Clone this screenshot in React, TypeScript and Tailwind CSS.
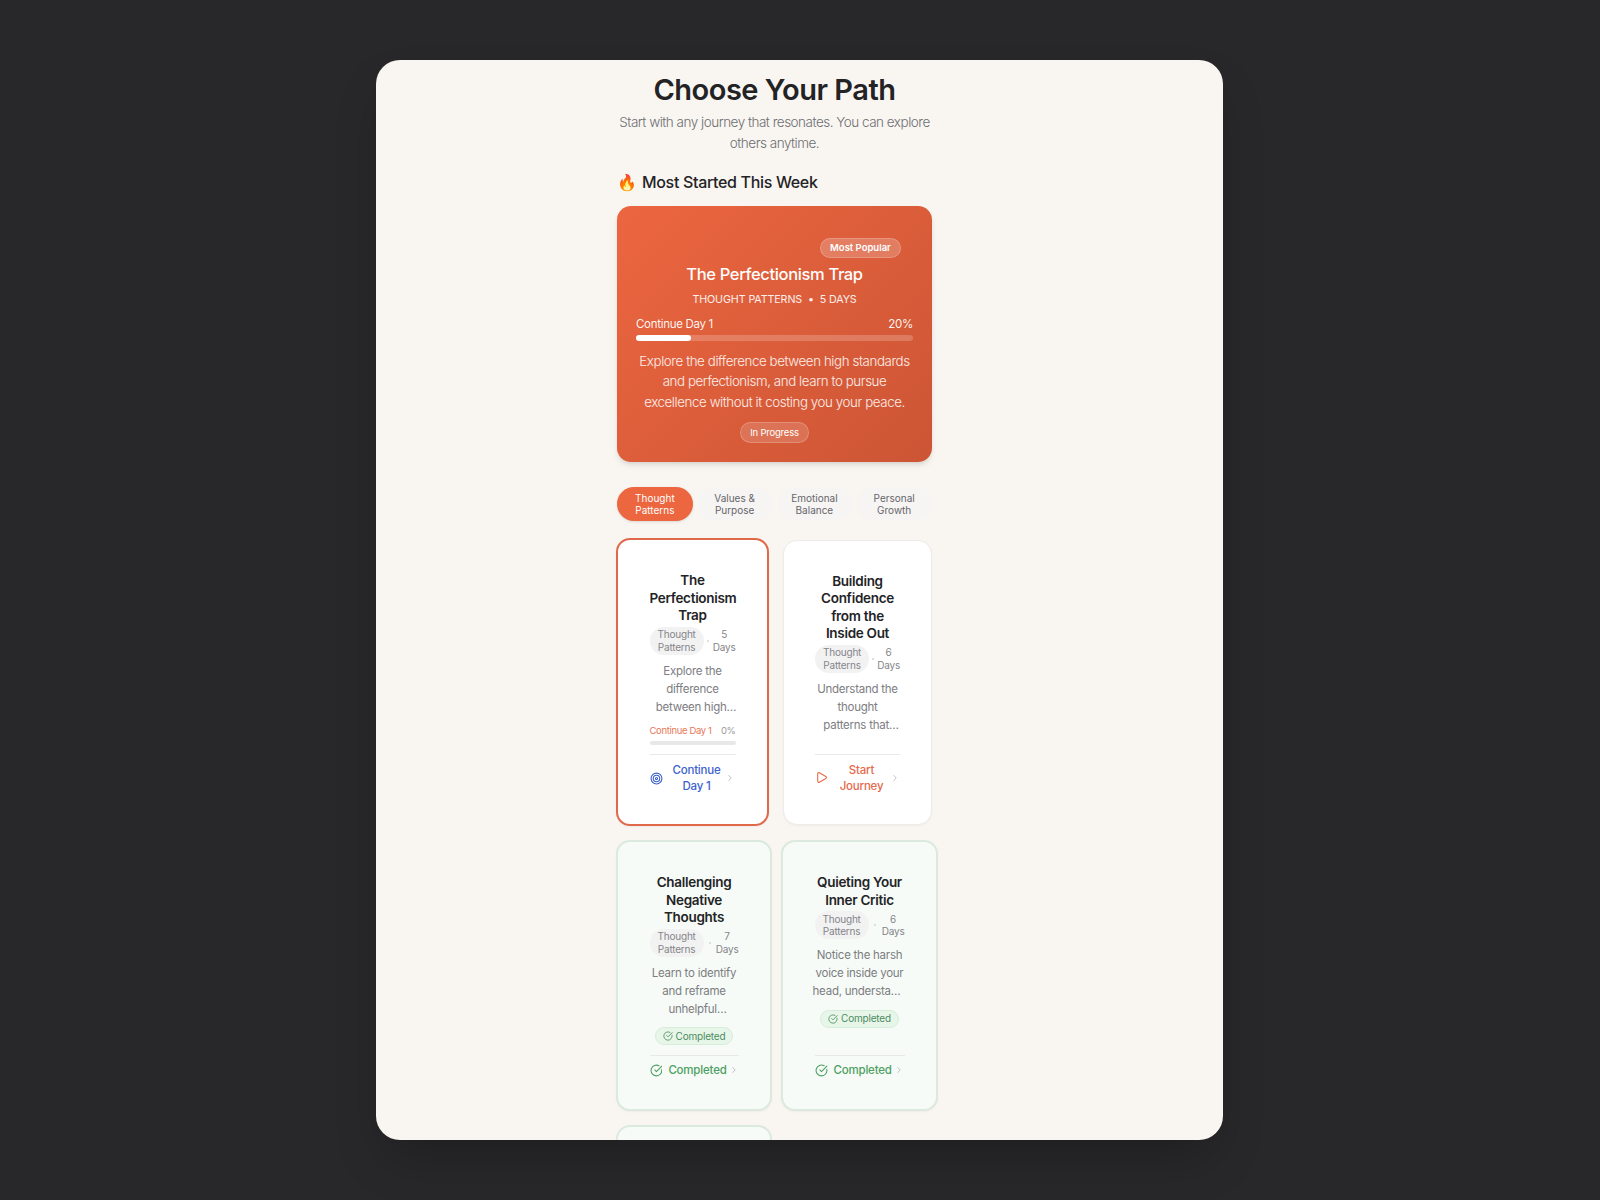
import React from 'react';
import { ChevronRight, CircleCheckBig, Play, Target } from 'lucide-react';

const font = { fontFamily: 'Inter, "Noto Sans", sans-serif' };

const tabs = [
  ['Thought', 'Patterns'],
  ['Values &', 'Purpose'],
  ['Emotional', 'Balance'],
  ['Personal', 'Growth'],
];

interface CardProps {
  title: string[];
  days: string;
  desc: string[];
  tone: 'active' | 'plain' | 'done';
  size: string;
  inner: string;
  lastLine?: string;
  children?: React.ReactNode;
  footer: React.ReactNode;
}

const toneClass = {
  active: 'bg-white border-2 border-[#e0694a] pt-[32px]',
  plain: 'bg-white border border-[#eeece8] pt-[32px]',
  done: 'bg-[#f6fbf7] border-2 border-[#dce9de] pt-[32px]',
};

const Card: React.FC<CardProps> = ({ title, days, desc, tone, size, inner, lastLine, children, footer }) => (
  <div className={`${size} ${toneClass[tone]} shrink-0 rounded-[14px] shadow-[0_1px_2px_rgba(0,0,0,0.04)] flex flex-col items-center`}>
    <div className={`${inner} flex flex-col flex-1 pb-[31px]`}>
      <h3 className="text-[13.5px] leading-[17.5px] font-semibold text-[#232326] text-center tracking-[-0.3px]">
        {title.map((t) => (
          <div key={t}>{t}</div>
        ))}
      </h3>
      <div className="flex items-center justify-between mt-[2px] text-[10px] leading-[12.5px] text-[#85858a] text-center tracking-[-0.2px]">
        <span className="rounded-full bg-[#f2f2f2] px-2 py-[1.5px]">
          Thought
          <br />
          Patterns
        </span>
        <span className="w-[2px] h-[2px] rounded-full bg-[#d5d5d5]" />
        <span>
          {days.split(' ')[0]}
          <br />
          Days
        </span>
      </div>
      <div className="mt-[7px] text-[11.5px] leading-[18px] text-[#7d7d82] text-center tracking-[-0.25px] whitespace-nowrap">
        {desc.map((line, i) => (
          <div key={line} className={i === desc.length - 1 ? lastLine ?? 'ml-[3.5px] -mr-[3.5px]' : ''}>
            {line}
          </div>
        ))}
      </div>
      {children}
      <div className="mt-auto border-t border-[#e9e9e7]">{footer}</div>
    </div>
  </div>
);

const DoneBadge = () => (
  <div className="self-center mt-[9.5px] flex items-center gap-[3px] h-[18px] px-[7px] rounded-full bg-[#e8f6ea] border border-[#d5edd9] text-[10px] text-[#4b8c5e] tracking-[-0.2px]">
    <CircleCheckBig size={10} />
    Completed
  </div>
);

const DoneFooter = () => (
  <div className="flex items-center pt-[6px] text-[11.5px] leading-4 font-medium text-[#4da062] tracking-[-0.2px]">
    <CircleCheckBig size={13} />
    <span className="ml-[6px]">Completed</span>
    <ChevronRight size={10} className="ml-[2px] text-[#b5b5b5]" />
  </div>
);

export default function App() {
  return (
    <div className="min-h-screen bg-[#28272a] flex items-center justify-center pr-[2px]" style={font}>
      <div className="w-[847px] h-[1080px] bg-[#f9f6f1] rounded-[24px] overflow-hidden shadow-2xl pl-[241.5px] pt-[12px]">
        <div className="w-[315px]">
          <h1 className="text-[29px] leading-9 font-semibold text-[#232326] text-center tracking-[-0.5px]">Choose Your Path</h1>
          <p className="mt-[4px] text-[13.5px] leading-[20.5px] font-light text-[#6e6e72] text-center tracking-[-0.5px] whitespace-nowrap">
            Start with any journey that resonates. You can explore
            <br />
            others anytime.
          </p>
          <div className="mt-[17px] flex items-center gap-[5px] h-6">
            <span className="text-[16px] leading-6">🔥</span>
            <h2 className="text-[16px] font-medium text-[#232326] tracking-[-0.33px]">Most Started This Week</h2>
          </div>

          <div className="mt-[12px] h-[256px] w-[315px] rounded-[14px] bg-[linear-gradient(135deg,#ec6640,#cc5535)] shadow-md px-[19px] pt-[32px] text-white text-center flex flex-col items-center">
            <span className="self-end mr-[12px] h-5 w-[81px] rounded-full bg-white/20 border border-white/20 text-[9.5px] leading-[18px] font-semibold">Most Popular</span>
            <h3 className="mt-[4px] text-[16.5px] leading-6 font-medium tracking-[-0.35px]">The Perfectionism Trap</h3>
            <p className="mt-[4px] text-[10.7px] leading-5 text-white/90 tracking-[-0.1px] whitespace-pre">THOUGHT PATTERNS  •  5 DAYS</p>
            <div className="mt-[4px] w-full flex justify-between text-[11.5px] leading-5 text-white/95 tracking-[-0.3px]">
              <span>Continue Day 1</span>
              <span>20%</span>
            </div>
            <div className="mt-[1px] w-full h-[6px] rounded-full bg-white/20">
              <div className="h-full rounded-full bg-white" style={{ width: '20%' }} />
            </div>
            <p className="mt-[10px] text-[13.3px] leading-[20.4px] text-white/90 font-light tracking-[-0.4px]">
              Explore the difference between high standards and perfectionism, and learn to pursue excellence without it costing you your peace.
            </p>
            <span className="mt-[10px] h-[21px] w-[69px] rounded-full bg-white/15 border border-white/20 text-[9.5px] leading-[19px] tracking-[-0.2px]">In Progress</span>
          </div>

          <div className="mt-[25px] grid grid-cols-4 gap-[4px] w-[315px]">
            {tabs.map((t, i) => (
              <div
                key={t[0]}
                className={`h-[34px] rounded-full flex flex-col justify-center text-center text-[10px] leading-[12.5px] ${i === 0 ? 'bg-[#ec6640] text-white shadow-sm' : 'bg-[#f6f5f3] text-[#66666b]'}`}
              >
                <span>{t[0]}</span>
                <span>{t[1]}</span>
              </div>
            ))}
          </div>

          <div className="mt-[17px] -ml-[1px] flex items-center gap-[14px] w-[330px]">
            <Card
              tone="active"
              size="w-[153px] h-[288px]"
              inner="w-[86px]"
              title={['The', 'Perfectionism', 'Trap']}
              days="5 Days"
              desc={['Explore the', 'difference', 'between high…']}
              footer={
                <div className="flex items-center justify-between pt-[7px] -mb-[1px] text-[11.5px] leading-4 font-medium text-[#3b62cf] text-center tracking-[-0.2px]">
                  <Target size={13} />
                  <span className="ml-[5px]">Continue<br />Day 1</span>
                  <ChevronRight size={10} className="text-[#b5b5b5]" />
                </div>
              }
            >
              <div className="mt-[8px] flex justify-between text-[9.5px] leading-[14px] tracking-[-0.35px]">
                <span className="text-[#e8775a]">Continue Day 1</span>
                <span className="text-[#9a9a9e]">0%</span>
              </div>
              <div className="mt-[3px] h-[4.5px] rounded-full bg-[#e8e8e8]" />
            </Card>
            <Card
              tone="plain"
              size="w-[149px] h-[285px]"
              inner="w-[85px]"
              title={['Building', 'Confidence', 'from the', 'Inside Out']}
              days="6 Days"
              desc={['Understand the', 'thought', 'patterns that…']}
              footer={
                <div className="flex items-center justify-between pt-[7px] -mb-[1px] text-[11.5px] leading-4 font-medium text-[#e5694a] text-center tracking-[-0.2px]">
                  <Play size={13} />
                  <span className="ml-[5px]">Start<br />Journey</span>
                  <ChevronRight size={10} className="text-[#b5b5b5]" />
                </div>
              }
            />
          </div>

          <div className="mt-[14px] -ml-[1px] flex gap-[9px] w-[330px]">
            <Card
              tone="done"
              size="w-[156px] h-[271px]"
              inner="w-[89px]"
              title={['Challenging', 'Negative', 'Thoughts']}
              days="7 Days"
              desc={['Learn to identify', 'and reframe', 'unhelpful…']}
              footer={<DoneFooter />}
            >
              <DoneBadge />
            </Card>
            <Card
              tone="done"
              size="w-[157px] h-[271px]"
              inner="w-[90px]"
              title={['Quieting Your', 'Inner Critic']}
              days="6 Days"
              desc={['Notice the harsh', 'voice inside your', 'head, understa…']}
              lastLine="-ml-[3px] mr-[3px]"
              footer={<DoneFooter />}
            >
              <DoneBadge />
            </Card>
          </div>

          <div className="mt-[14px] -ml-[1px] w-[156px] h-[200px] rounded-[14px] bg-[#f6fbf7] border-2 border-[#dce9de]" />
        </div>
      </div>
    </div>
  );
}
